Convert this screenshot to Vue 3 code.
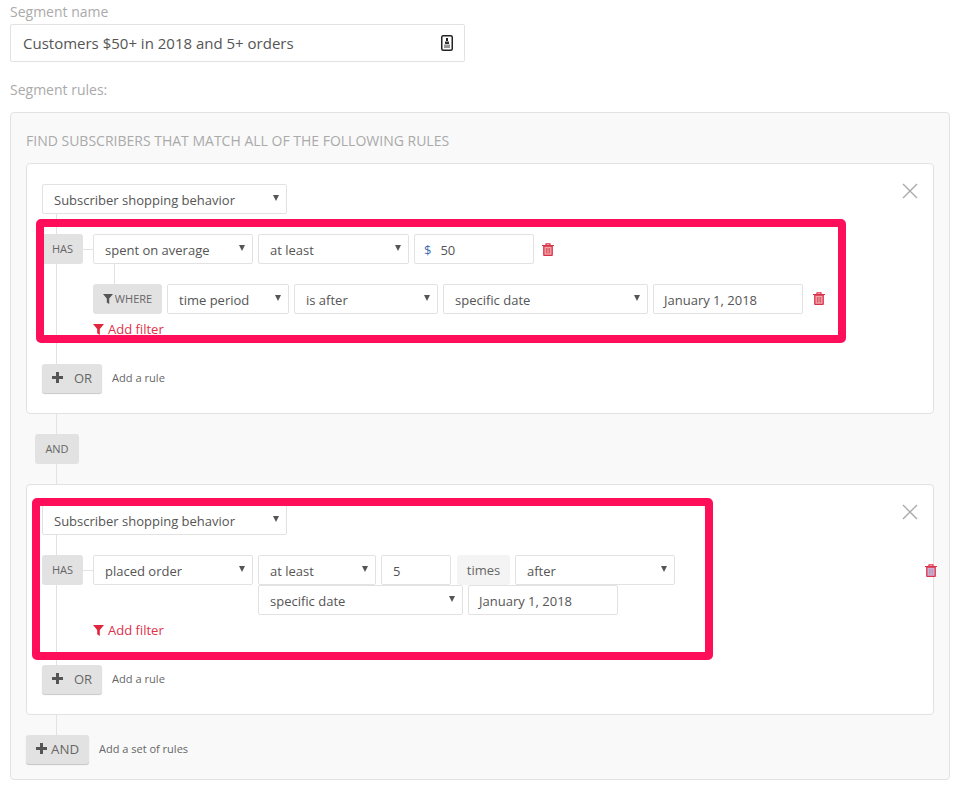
<script setup>
</script>

<template>
  <div class="page">
    <div class="label name-label">Segment name</div>
    <div class="name-input">
      <span>Customers $50+ in 2018 and 5+ orders</span>
      <svg class="name-icon" width="12" height="16" viewBox="0 0 12 16">
        <rect x="0.75" y="0.75" width="10.5" height="14.5" rx="1.5" fill="#fff" stroke="#222" stroke-width="1.5" />
        <rect x="5" y="3" width="2" height="3" fill="#222" />
        <path d="M4 6.5h4v2.5H4z" fill="#333" />
        <rect x="3" y="9.5" width="6" height="3.5" fill="#999" />
      </svg>
    </div>
    <div class="label rules-label">Segment rules:</div>

    <div class="panel">
      <div class="panel-title">FIND SUBSCRIBERS THAT MATCH ALL OF THE FOLLOWING RULES</div>

      <section class="card card-one">
        <span class="close">
          <svg width="16" height="16" viewBox="0 0 16 16"><path d="M1 1l14 14M15 1L1 15" stroke="#aaa" stroke-width="1.4" fill="none" /></svg>
        </span>
        <i class="vline l-one"></i>
        <i class="vline l-one-b"></i>
        <i class="hline h-one"></i>
        <div class="control select w245">Subscriber shopping behavior<b class="caret"></b></div>
        <div class="row row-has">
          <div class="badge has">HAS</div>
          <div class="control select w160">spent on average<b class="caret"></b></div>
          <div class="control select w151">at least<b class="caret"></b></div>
          <div class="control money"><span class="dollar">$</span>50</div>
          <svg class="trash t-one" width="12" height="13" viewBox="0 0 12 13">
            <path d="M0 2.5h12M4 2.5V.8h4v1.7" stroke="#d9304a" stroke-width="1.2" fill="none" />
            <path d="M1.8 3h8.4v8.8a.7.7 0 0 1-.7.7h-7a.7.7 0 0 1-.7-.7z" fill="#eea6a6" stroke="#d9304a" stroke-width="1.3" />
            <path d="M4.4 5v5.5M6 5v5.5M7.6 5v5.5" stroke="#d9304a" stroke-width=".7" />
          </svg>
        </div>
        <div class="row row-where">
          <div class="badge where">
            <svg width="10" height="10" viewBox="0 0 10 10"><path d="M0 0h10L6.2 4.6V10L3.8 8.4V4.6z" fill="#555" /></svg>
            WHERE
          </div>
          <div class="control select w122">time period<b class="caret"></b></div>
          <div class="control select w144">is after<b class="caret"></b></div>
          <div class="control select w205">specific date<b class="caret"></b></div>
          <div class="control date w150">January 1, 2018</div>
          <svg class="trash t-two" width="12" height="13" viewBox="0 0 12 13">
            <path d="M0 2.5h12M4 2.5V.8h4v1.7" stroke="#d9304a" stroke-width="1.2" fill="none" />
            <path d="M1.8 3h8.4v8.8a.7.7 0 0 1-.7.7h-7a.7.7 0 0 1-.7-.7z" fill="#eea6a6" stroke="#d9304a" stroke-width="1.3" />
            <path d="M4.4 5v5.5M6 5v5.5M7.6 5v5.5" stroke="#d9304a" stroke-width=".7" />
          </svg>
        </div>
        <div class="add-filter f-one">
          <svg width="11" height="11" viewBox="0 0 10 10"><path d="M0 0h10L6.2 4.6V10L3.8 8.4V4.6z" fill="#e0263c" /></svg>
          Add filter
        </div>
        <div class="add-line or-line">
          <div class="btn or"><svg width="11" height="11" viewBox="0 0 11 11"><path d="M4 0h3v4h4v3H7v4H4V7H0V4h4z" fill="#555" /></svg><span>OR</span></div>
          <span class="hint">Add a rule</span>
        </div>
      </section>

      <div class="joiner">
        <i class="vline j-line"></i>
        <div class="badge and">AND</div>
      </div>

      <section class="card card-two">
        <span class="close">
          <svg width="16" height="16" viewBox="0 0 16 16"><path d="M1 1l14 14M15 1L1 15" stroke="#aaa" stroke-width="1.4" fill="none" /></svg>
        </span>
        <i class="vline l-two"></i>
        <i class="hline h-two"></i>
        <div class="control select w245">Subscriber shopping behavior<b class="caret"></b></div>
        <div class="row row-has">
          <div class="badge has">HAS</div>
          <div class="control select w160">placed order<b class="caret"></b></div>
          <div class="stack">
            <div class="stack-row">
              <div class="control select w118">at least<b class="caret"></b></div>
              <div class="control w70">5</div>
              <div class="times">times</div>
              <div class="control select w160">after<b class="caret"></b></div>
            </div>
            <div class="stack-row">
              <div class="control select w205">specific date<b class="caret"></b></div>
              <div class="control date w150">January 1, 2018</div>
            </div>
          </div>
          <svg class="trash t-three" width="12" height="13" viewBox="0 0 12 13">
            <path d="M0 2.5h12M4 2.5V.8h4v1.7" stroke="#e0304a" stroke-width="1.2" fill="none" />
            <path d="M1.8 3h8.4v8.8a.7.7 0 0 1-.7.7h-7a.7.7 0 0 1-.7-.7z" fill="#c9b4d6" stroke="#e0304a" stroke-width="1.3" />
            <path d="M4.4 5v5.5M6 5v5.5M7.6 5v5.5" stroke="#b88aa8" stroke-width=".7" />
          </svg>
        </div>
        <div class="add-filter f-two">
          <svg width="11" height="11" viewBox="0 0 10 10"><path d="M0 0h10L6.2 4.6V10L3.8 8.4V4.6z" fill="#e0263c" /></svg>
          Add filter
        </div>
        <div class="add-line or-line">
          <div class="btn or"><svg width="11" height="11" viewBox="0 0 11 11"><path d="M4 0h3v4h4v3H7v4H4V7H0V4h4z" fill="#555" /></svg><span>OR</span></div>
          <span class="hint">Add a rule</span>
        </div>
      </section>

      <div class="footer">
        <i class="vline j-line-b"></i>
        <div class="btn and-btn"><svg width="11" height="11" viewBox="0 0 11 11"><path d="M4 0h3v4h4v3H7v4H4V7H0V4h4z" fill="#555" /></svg><span>AND</span></div>
        <span class="hint">Add a set of rules</span>
      </div>

      <div class="callout c-one"></div>
      <div class="callout c-two"></div>
    </div>
  </div>
</template>

<style>
html, body { margin: 0; background: #fff; }
</style>

<style scoped>
.page {
  width: 957px;
  height: 787px;
  box-sizing: border-box;
  padding: 0 7px 0 10px;
  overflow: hidden;
  font-family: "Open Sans", sans-serif;
  color: #555;
}
.label { font-size: 14px; color: #aaa; line-height: 20px; }
.name-label { margin-top: 2px; height: 22px; }
.name-input {
  width: 455px;
  height: 38px;
  box-sizing: border-box;
  border: 1px solid #e2e2e2;
  border-radius: 2px;
  padding: 0 11px 0 12px;
  display: flex;
  align-items: center;
  justify-content: space-between;
  font-size: 15px;
  color: #555;
}
.rules-label { margin-top: 18px; height: 32px; }
.panel {
  position: relative;
  width: 940px;
  height: 668px;
  box-sizing: border-box;
  background: #f9f9f9;
  border: 1px solid #e2e2e2;
  border-radius: 4px;
  padding: 0 15px;
}
.panel-title {
  height: 50px;
  line-height: 56px;
  font-size: 14px;
  color: #aaa;
}
.card {
  position: relative;
  background: #fff;
  border: 1px solid #e2e2e2;
  border-radius: 4px;
  box-sizing: border-box;
  padding: 20px 15px 0;
}
.card-one { height: 251px; }
.card-two { height: 231px; }
.close { position: absolute; right: 15px; top: 18px; width: 16px; height: 16px; }
.control {
  position: relative;
  height: 30px;
  box-sizing: border-box;
  border: 1px solid #e2e2e2;
  border-radius: 2px;
  background: #fff;
  padding: 0 11px;
  line-height: 30px;
  font-size: 13px;
  color: #555;
  flex: none;
  white-space: nowrap;
}
.date { padding-left: 10px; }
.caret {
  position: absolute;
  right: 7px;
  top: 10px;
  width: 0;
  height: 0;
  border-left: 3px solid transparent;
  border-right: 3px solid transparent;
  border-top: 6px solid #555;
}
.w245 { width: 245px; position: relative; z-index: 1; }
.w160 { width: 160px; }
.w151 { width: 151px; }
.w122 { width: 122px; }
.w144 { width: 144px; }
.w205 { width: 205px; }
.w150 { width: 150px; }
.w118 { width: 118px; }
.w70 { width: 70px; }
.money { width: 120px; padding-left: 9px; }
.dollar { color: #3d6fb0; margin-right: 9px; }
.row { display: flex; align-items: flex-start; gap: 5px; position: relative; z-index: 1; }
.row-has { margin-top: 20px; }
.row-where { margin-top: 20px; margin-left: 51px; }
.badge {
  background: #e2e2e2;
  border-radius: 3px;
  height: 30px;
  line-height: 30px;
  font-size: 11px;
  text-align: center;
  color: #666;
  flex: none;
  box-sizing: border-box;
}
.has { width: 41px; margin-right: 5px; }
.where { width: 69px; display: flex; align-items: center; justify-content: center; gap: 2px; }
.and { width: 44px; position: relative; z-index: 1; }
.trash { flex: none; }
.t-one { margin: 9px 0 0 3px; }
.t-two { margin: 8px 0 0 5px; }
.t-three { position: absolute; left: 883px; top: 9px; }
.stack { display: flex; flex-direction: column; }
.stack-row { display: flex; gap: 5px; }
.times {
  width: 53px;
  height: 30px;
  line-height: 30px;
  margin-left: 1px;
  flex: none;
  text-align: center;
  background: #f4f4f4;
  border-radius: 3px;
  font-size: 13px;
  color: #666;
}
.add-filter {
  display: flex;
  align-items: center;
  gap: 4px;
  margin-left: 51px;
  font-size: 13px;
  color: #e0304a;
  height: 18px;
  line-height: 18px;
  position: relative;
}
.f-one { margin-top: 6px; }
.f-two { margin-top: 6px; }
.add-line { display: flex; align-items: center; gap: 10px; position: relative; }
.or-line { margin-top: 26px; }
.btn {
  background: #e2e2e2;
  border-radius: 3px;
  box-shadow: 0 1px 1px rgba(0, 0, 0, .22);
  height: 29px;
  padding-bottom: 2px;
  display: flex;
  align-items: center;
  box-sizing: border-box;
  font-size: 13px;
  color: #666;
  flex: none;
}
.or { width: 60px; padding-left: 10px; gap: 11px; }
.and-btn { width: 63px; padding-left: 10px; gap: 4px; font-size: 13.3px; }
.hint { font-size: 11.1px; color: #666; padding-bottom: 2px; }
.joiner { position: relative; height: 70px; display: flex; align-items: center; padding-left: 9px; }
.footer { position: relative; height: 50px; padding-top: 20px; box-sizing: border-box; display: flex; align-items: flex-start; gap: 10px; }
.footer .hint { line-height: 27px; font-size: 11px; }
.vline { position: absolute; width: 1px; background: #e2e2e2; }
.hline { position: absolute; height: 1px; background: #e2e2e2; }
.l-one { left: 29px; top: 50px; height: 150px; }
.l-one-b { left: 87px; top: 100px; height: 20px; }
.h-one { left: 56px; top: 85px; width: 10px; }
.l-two { left: 29px; top: 50px; height: 130px; }
.h-two { left: 56px; top: 85px; width: 10px; }
.j-line { left: 30px; top: 0; height: 70px; }
.j-line-b { left: 30px; top: 0; height: 20px; }
.callout {
  position: absolute;
  box-sizing: border-box;
  border: 8px solid #ff0f5a;
  border-radius: 5px;
  z-index: 2;
}
.c-one { left: 25px; top: 106px; width: 810px; height: 124px; }
.c-two { left: 21px; top: 385px; width: 681px; height: 162px; }
</style>
